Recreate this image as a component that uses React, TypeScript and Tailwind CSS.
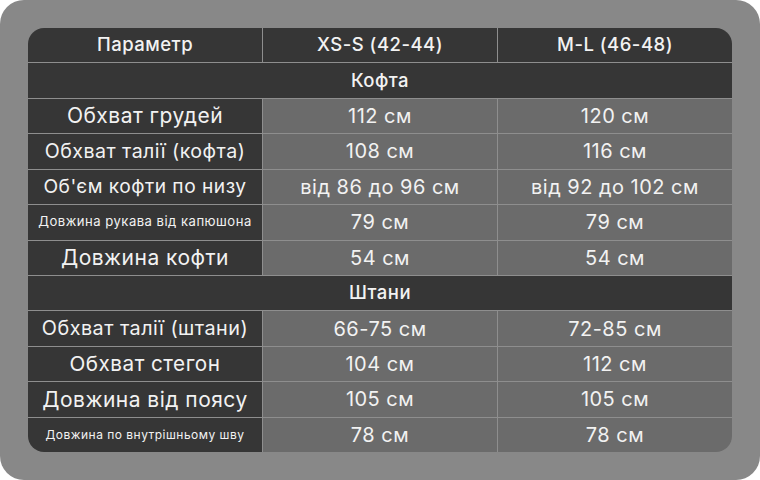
type Row =
  | { kind: "section"; title: string }
  | { kind: "data"; label: string; size: string; xs: string; ml: string };

// label sizes are tuned so each label fills the first column like the source image
const table: Row[] = [
  { kind: "section", title: "Кофта" },
  { kind: "data", label: "Обхват грудей", size: "text-[21px]", xs: "112 см", ml: "120 см" },
  { kind: "data", label: "Обхват талії (кофта)", size: "text-[19.6px]", xs: "108 см", ml: "116 см" },
  { kind: "data", label: "Об'єм кофти по низу", size: "text-[19.2px]", xs: "від 86 до 96 см", ml: "від 92 до 102 см" },
  { kind: "data", label: "Довжина рукава від капюшона", size: "text-[13.1px]", xs: "79 см", ml: "79 см" },
  { kind: "data", label: "Довжина кофти", size: "text-[21px]", xs: "54 см", ml: "54 см" },
  { kind: "section", title: "Штани" },
  { kind: "data", label: "Обхват талії (штани)", size: "text-[19.8px]", xs: "66-75 см", ml: "72-85 см" },
  { kind: "data", label: "Обхват стегон", size: "text-[20.7px]", xs: "104 см", ml: "112 см" },
  { kind: "data", label: "Довжина від поясу", size: "text-[21px]", xs: "105 см", ml: "105 см" },
  { kind: "data", label: "Довжина по внутрішньому шву", size: "text-[12px]", xs: "78 см", ml: "78 см" },
];

const head = "flex items-center justify-center bg-[#363636] text-[18.5px] font-medium";

export default function App() {
  return (
    <div className="w-[760px] h-[480px] rounded-[24px] bg-[#888888] p-[28px] font-['Inter','Liberation_Sans',sans-serif] tracking-[0.03em] text-[#f2f2f2]">
      <div className="grid h-[424px] grid-cols-3 grid-rows-[repeat(12,1fr)] gap-px overflow-hidden rounded-[16px] bg-[#8e8e8e]">
        <div className={head}>Параметр</div>
        <div className={head}>XS-S (42-44)</div>
        <div className={head}>M-L (46-48)</div>
        {table.map((r, i) =>
          r.kind === "section" ? (
            <div key={i} className={`col-span-3 ${head}`}>
              {r.title}
            </div>
          ) : (
            [
              <div key={`${i}-l`} className={`flex items-center justify-center whitespace-nowrap bg-[#363636] ${r.size}`}>
                {r.label}
              </div>,
              <div key={`${i}-a`} className="flex items-center justify-center bg-[#6b6b6b] text-[20px]">
                {r.xs}
              </div>,
              <div key={`${i}-b`} className="flex items-center justify-center bg-[#6b6b6b] text-[20px]">
                {r.ml}
              </div>,
            ]
          )
        )}
      </div>
    </div>
  );
}
